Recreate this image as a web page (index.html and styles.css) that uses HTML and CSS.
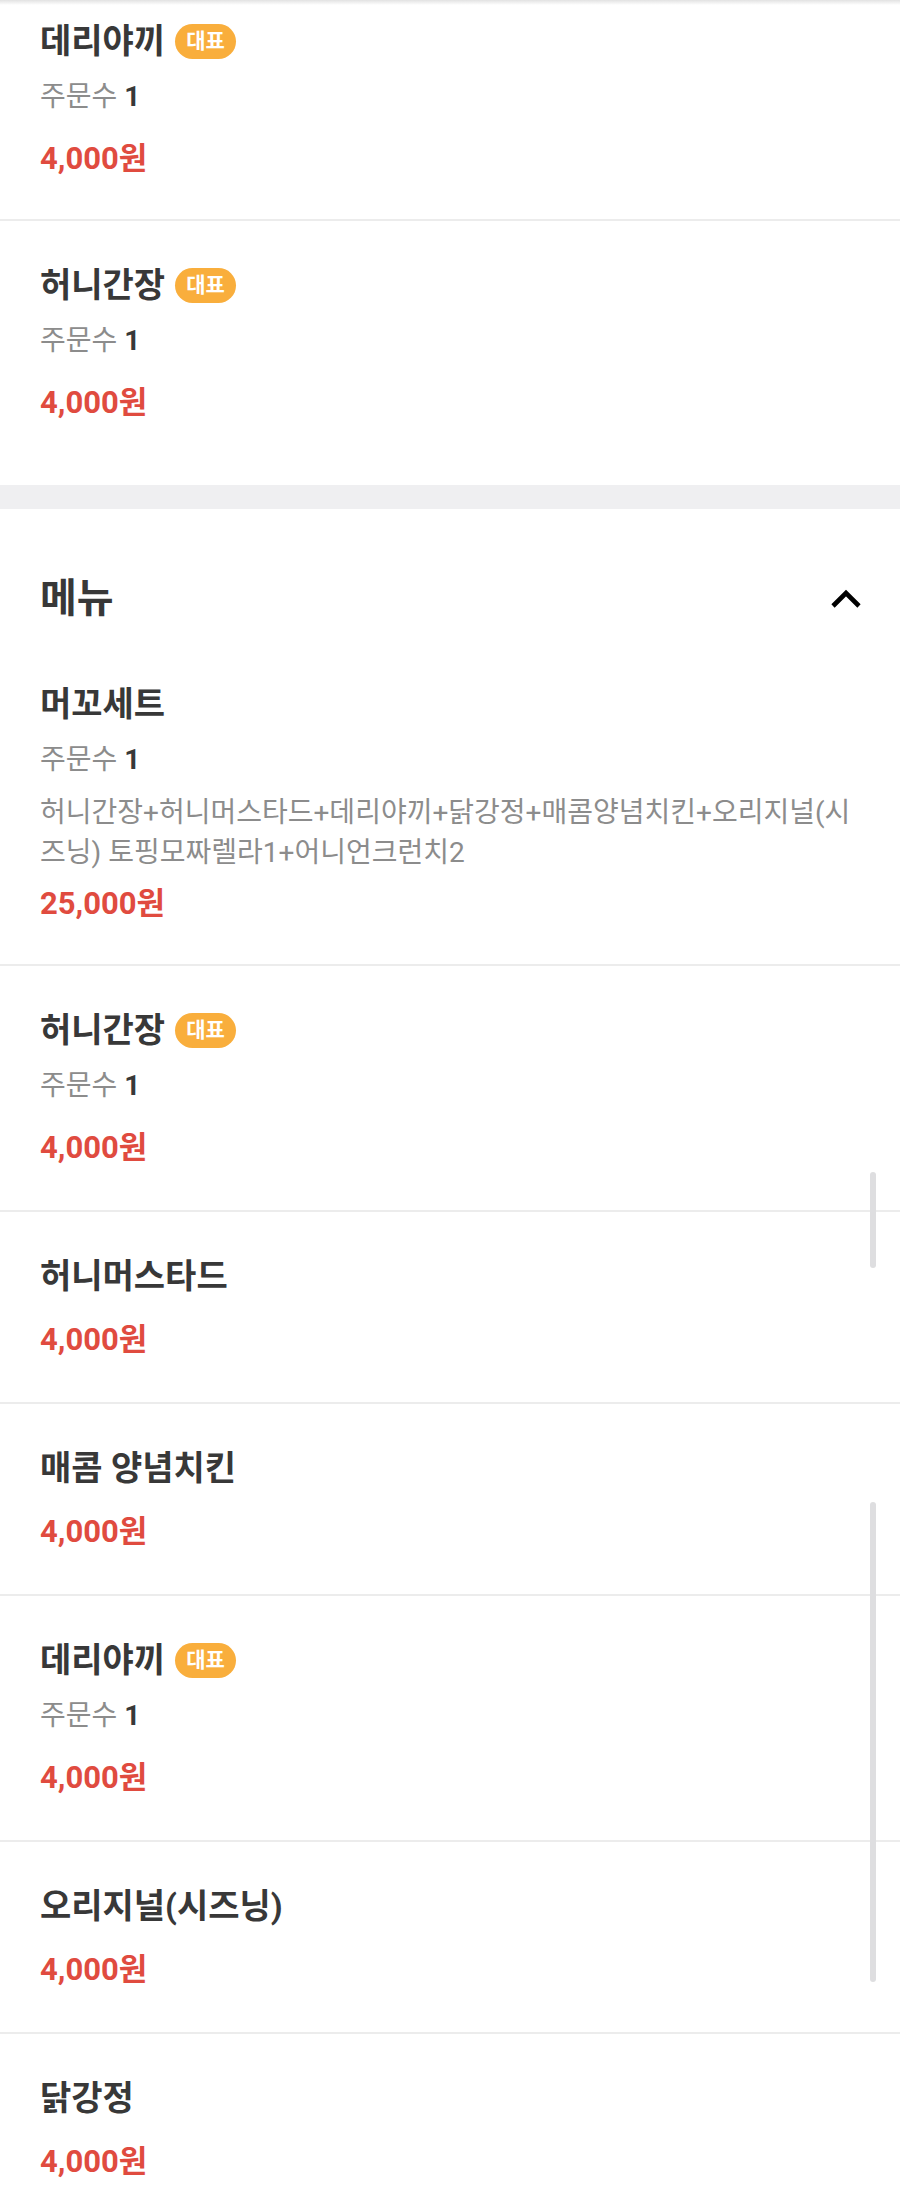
FILE: index.html
```html
<!DOCTYPE html>
<html lang="ko">
<head>
<meta charset="utf-8">
<title>메뉴</title>
<link rel="stylesheet" href="styles.css">
</head>
<body>
<div class="page">
  <div class="top-shade"></div>

  <section class="group">
    <div class="item cut">
      <div class="title-row"><span class="title">데리야끼</span><span class="badge">대표</span></div>
      <div class="sub">주문수 <b>1</b></div>
      <div class="price">4,000원</div>
    </div>
    <div class="item last">
      <div class="title-row"><span class="title">허니간장</span><span class="badge">대표</span></div>
      <div class="sub">주문수 <b>1</b></div>
      <div class="price">4,000원</div>
    </div>
  </section>

  <div class="band"></div>

  <section class="group">
    <header class="group-head">
      <h2 class="group-title">메뉴</h2>
      <svg class="chevron" width="32" height="20" viewBox="0 0 32 20" aria-hidden="true">
        <polyline points="3,17 16,4 29,17" fill="none" stroke="#000" stroke-width="4.6" stroke-linejoin="miter"/>
      </svg>
    </header>

    <div class="item set">
      <div class="title-row"><span class="title">머꼬세트</span></div>
      <div class="sub">주문수 <b>1</b></div>
      <div class="desc">허니간장+허니머스타드+데리야끼+닭강정+매콤양념치킨+오리지널(시즈닝) 토핑모짜렐라1+어니언크런치2</div>
      <div class="price">25,000원</div>
    </div>
    <div class="item">
      <div class="title-row"><span class="title">허니간장</span><span class="badge">대표</span></div>
      <div class="sub">주문수 <b>1</b></div>
      <div class="price">4,000원</div>
    </div>
    <div class="item">
      <div class="title-row"><span class="title">허니머스타드</span></div>
      <div class="price">4,000원</div>
    </div>
    <div class="item">
      <div class="title-row"><span class="title">매콤 양념치킨</span></div>
      <div class="price">4,000원</div>
    </div>
    <div class="item">
      <div class="title-row"><span class="title">데리야끼</span><span class="badge">대표</span></div>
      <div class="sub">주문수 <b>1</b></div>
      <div class="price">4,000원</div>
    </div>
    <div class="item">
      <div class="title-row"><span class="title">오리지널(시즈닝)</span></div>
      <div class="price">4,000원</div>
    </div>
    <div class="item">
      <div class="title-row"><span class="title">닭강정</span></div>
      <div class="price">4,000원</div>
    </div>
  </section>

  <div class="scroll-thumb thumb-a"></div>
  <div class="scroll-thumb thumb-b"></div>
</div>
</body>
</html>
```

FILE: styles.css
```css
* { box-sizing: border-box; }

html, body {
  margin: 0;
  padding: 0;
  background: #ffffff;
}

body {
  font-family: Roboto, "Noto Sans CJK KR", sans-serif;
  color: #383838;
  overflow: hidden;
}

.page {
  position: relative;
  width: 900px;
  height: 2189px;
  overflow: hidden;
}

.top-shade {
  position: absolute;
  left: 0;
  top: 0;
  width: 100%;
  height: 5px;
  background: linear-gradient(#e2e2e2, rgba(255, 255, 255, 0));
  z-index: 2;
}

.item {
  padding: 40px 40px 42px;
  border-bottom: 2px solid #ececec;
}

.item.cut {
  padding-top: 17px;
  padding-bottom: 40px;
}

.item.last {
  padding-bottom: 62px;
  border-bottom: none;
}

.title-row {
  display: flex;
  align-items: center;
  height: 48px;
}

.title {
  font-size: 34px;
  font-weight: 700;
  line-height: 48px;
  color: #383838;
}

.badge {
  margin-left: 10px;
  height: 35px;
  padding: 0 11px;
  border-radius: 18px;
  background: #f9ae3c;
  color: #ffffff;
  font-size: 21px;
  font-weight: 700;
  line-height: 35px;
}

.sub {
  margin-top: 14px;
  font-size: 28px;
  line-height: 36px;
  color: #8c8c8c;
}

.sub b {
  color: #383838;
  font-weight: 700;
}

.desc {
  margin-top: 15px;
  font-size: 28px;
  line-height: 40px;
  color: #8c8c8c;
}

.price {
  margin-top: 20px;
  font-size: 31px;
  font-weight: 700;
  line-height: 40px;
  color: #e04b3f;
}

.sub + .price { margin-top: 24px; }

.set { padding-bottom: 40px; }
.set .sub { margin-top: 14px; }
.set .desc + .price { margin-top: 11px; }

.band {
  height: 24px;
  background: #efeff1;
}

.group-head {
  display: flex;
  align-items: center;
  justify-content: space-between;
  padding: 66px 38px 17px 40px;
}

.group-title {
  margin: 0;
  font-size: 40px;
  font-weight: 700;
  line-height: 48px;
  color: #383838;
}

.chevron { display: block; }

.scroll-thumb {
  position: absolute;
  right: 24px;
  width: 6px;
  border-radius: 3px;
  background: #dedee0;
}

.thumb-a { top: 1172px; height: 96px; }
.thumb-b { top: 1502px; height: 480px; }
```
